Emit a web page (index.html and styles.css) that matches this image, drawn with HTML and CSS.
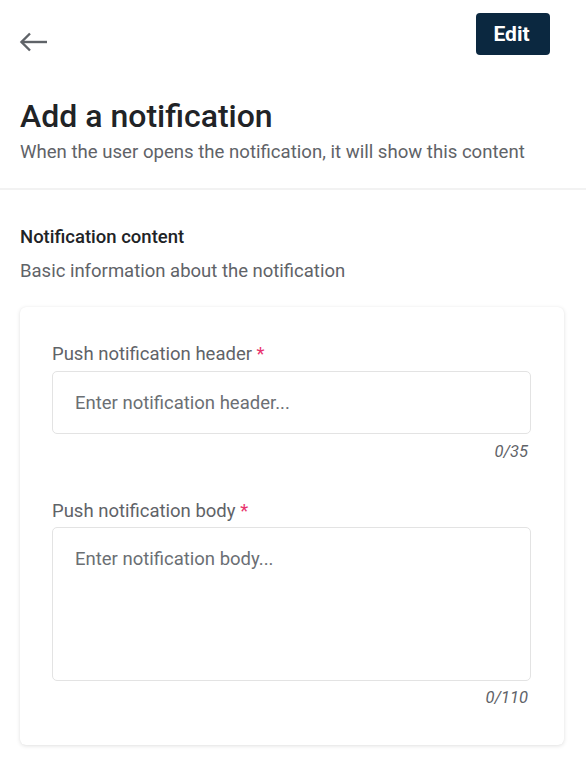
FILE: index.html
```html
<!DOCTYPE html>
<html lang="en">
<head>
<meta charset="utf-8">
<title>Add a notification</title>
<link rel="stylesheet" href="styles.css">
</head>
<body>
<div class="page">
  <header class="topbar">
    <button class="back" aria-label="Back">
      <svg width="30" height="24" viewBox="0 0 30 24" fill="none" stroke="#5f6368" stroke-width="2.4" stroke-linecap="butt" stroke-linejoin="miter">
        <line x1="3.5" y1="12" x2="29" y2="12"/>
        <polyline points="12,3.5 3.5,12 12,20.5"/>
      </svg>
    </button>
    <button class="edit">Edit</button>
  </header>

  <div class="intro">
    <h1 class="title">Add a notification</h1>
    <p class="subtitle">When the user opens the notification, it will show this content</p>
  </div>

  <section class="section">
    <h2 class="section-title">Notification content</h2>
    <p class="section-desc">Basic information about the notification</p>

    <div class="card">
      <div class="field">
        <label class="label">Push notification header <span class="req">*</span></label>
        <input class="input" type="text" placeholder="Enter notification header...">
        <div class="counter">0/35</div>
      </div>
      <div class="field field-second">
        <label class="label">Push notification body <span class="req">*</span></label>
        <textarea class="textarea" placeholder="Enter notification body..."></textarea>
        <div class="counter">0/110</div>
      </div>
    </div>
  </section>
</div>
</body>
</html>
```
FILE: styles.css
```css
* { box-sizing: border-box; }

html, body {
  margin: 0;
  padding: 0;
  background: #ffffff;
}

body {
  font-family: Roboto, "Liberation Sans", Arial, sans-serif;
  color: #202124;
}

.topbar {
  display: flex;
  justify-content: space-between;
  align-items: flex-start;
  padding: 13px 36px 0 18px;
}

.back {
  margin-top: 17px;
  padding: 0;
  border: 0;
  background: none;
  display: flex;
  cursor: pointer;
}

.edit {
  width: 74px;
  height: 42px;
  border: 0;
  border-radius: 4px;
  background: #0b2840;
  color: #ffffff;
  font-family: Roboto, "Liberation Sans", Arial, sans-serif;
  font-size: 21px;
  font-weight: 700;
  padding: 0 3px 0 0;
  cursor: pointer;
}

.intro {
  padding: 43px 20px 24px;
  border-bottom: 2px solid #f2f2f2;
}

.title {
  margin: 0;
  font-size: 32px;
  line-height: 36px;
  font-weight: 500;
  color: #212326;
}

.subtitle {
  margin: 6px 0 0;
  font-size: 18.6px;
  line-height: 24px;
  color: #5f6368;
}

.section {
  padding: 36px 22px 28px 20px;
}

.section-title {
  margin: 0;
  font-size: 18.5px;
  line-height: 22px;
  font-weight: 500;
  color: #212326;
}

.section-desc {
  margin: 11px 0 24px;
  font-size: 18.5px;
  line-height: 24px;
  color: #5f6368;
}

.card {
  background: #fff;
  border-radius: 6px;
  box-shadow: 0 1px 4px rgba(0, 0, 0, 0.12), 0 0 1px rgba(0, 0, 0, 0.06);
  padding: 35px 33px 37px 32px;
}

.field {
  display: flex;
  flex-direction: column;
}

.field-second {
  margin-top: 37px;
}

.label {
  font-size: 18.5px;
  line-height: 24px;
  color: #5f6368;
  margin-bottom: 5px;
}

.field-second .label {
  margin-bottom: 4px;
}

.req {
  color: #e8336e;
}

.input,
.textarea {
  width: 100%;
  border: 1px solid #e3e3e3;
  border-radius: 5px;
  background: #fff;
  font-family: Roboto, "Liberation Sans", Arial, sans-serif;
  font-size: 18.5px;
  line-height: 24px;
  color: #202124;
  outline: none;
  padding: 0 22px;
}

.input {
  height: 63px;
}

.textarea {
  height: 154px;
  resize: none;
  padding-top: 19px;
  display: block;
}

.input::placeholder,
.textarea::placeholder {
  color: #6b6f74;
  opacity: 1;
}

.counter {
  align-self: flex-end;
  margin-top: 8px;
  padding-right: 3px;
  font-size: 16.5px;
  line-height: 20px;
  font-style: italic;
  color: #5f6368;
}

.field-second .counter {
  margin-top: 7px;
}
```
